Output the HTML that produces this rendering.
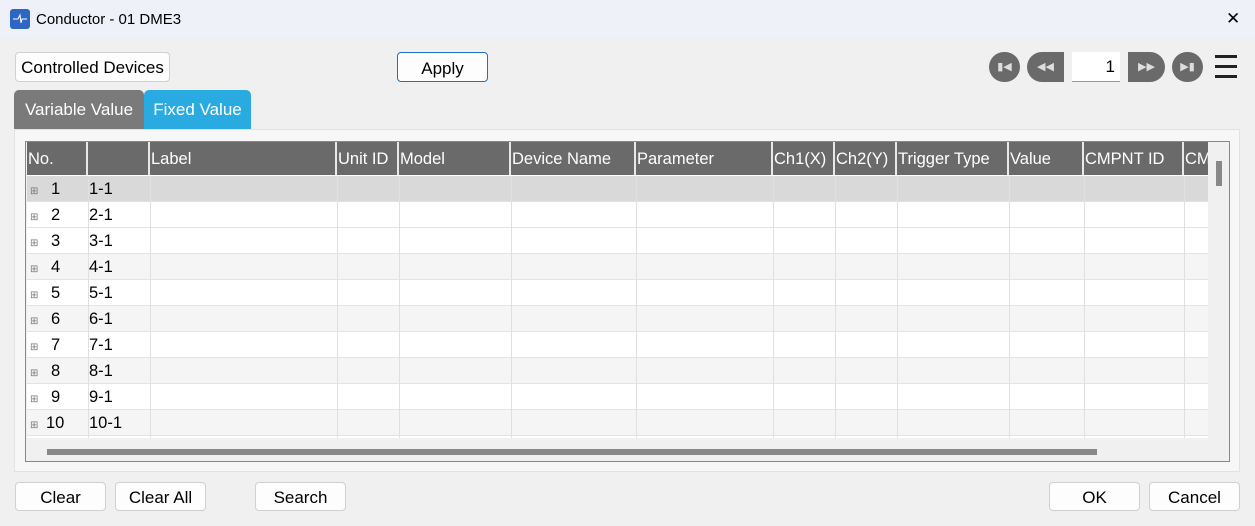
<!DOCTYPE html><html><head><style>
*{box-sizing:border-box;margin:0;padding:0}
body{width:1255px;height:526px;overflow:hidden;background:#f0f0f0;font-family:"Liberation Sans","DejaVu Sans",sans-serif;position:relative;font-size:16px;color:#000}
.a{position:absolute}
.btn{position:absolute;background:#fdfdfd;border:1px solid #d0d0d0;border-radius:4px;text-align:center;font-size:17px;line-height:29px}
.c{position:absolute;top:0;height:100%;border-left:1px solid #e0e0e0}
.h{position:absolute;top:0;height:33px;background:#6a6a6a;color:#fff;font-size:16.5px;line-height:34px;padding-left:1px;border-right:2px solid #e8e8e8}
.r{position:absolute;left:0;width:1181px;height:26px;border-bottom:1px solid #e3e3e3;font-size:16px;line-height:26px}
.nav{position:absolute;top:52px;height:30px;background:#6a6a6a;color:#ddd;font-size:11px;text-align:center;line-height:30px}
</style></head><body>
<div class="a" style="left:0;top:0;width:1255px;height:38px;background:#eef2f8"></div>
<div class="a" style="left:10px;top:9px;width:20px;height:20px;background:#2e66c4;border-radius:3px"><svg width="20" height="20"><path d="M3 10h5l2-4 1 8 1-4h5" stroke="#fff" fill="none" stroke-width="1"/></svg></div>
<div class="a" style="left:36px;top:11px;font-size:15px">Conductor - 01 DME3</div>
<div class="a" style="left:1226px;top:9px;font-size:17px">✕</div>
<div class="btn" style="left:15px;top:52px;width:155px;height:30px">Controlled Devices</div>
<div class="btn" style="left:397px;top:52px;width:91px;height:30px;border-color:#1a73c8;line-height:32px">Apply</div>
<div class="nav" style="left:989px;width:31px;border-radius:15px">▮◀</div>
<div class="nav" style="left:1027px;width:37px;border-radius:15px 0 0 15px">◀◀</div>
<div class="a" style="left:1072px;top:52px;width:48px;height:30px;background:#fff;border-bottom:1px solid #999;text-align:right;padding-right:5px;line-height:30px;font-size:17px">1</div>
<div class="nav" style="left:1128px;width:37px;border-radius:0 15px 15px 0">▶▶</div>
<div class="nav" style="left:1172px;width:31px;border-radius:15px">▶▮</div>
<div class="a" style="left:1215px;top:55px;width:22px;height:3px;background:#222;box-shadow:0 10px 0 #222,0 20px 0 #222"></div>
<div class="a" style="left:14px;top:90px;width:130px;height:39px;background:#7a7a7a;color:#fff;border-radius:5px 5px 0 0;font-size:17px;line-height:39px;text-align:center">Variable Value</div>
<div class="a" style="left:144px;top:90px;width:107px;height:39px;background:#29abe2;color:#fff;border-radius:5px 5px 0 0;font-size:17px;line-height:39px;text-align:center">Fixed Value</div>
<div class="a" style="left:14px;top:129px;width:1226px;height:343px;background:#f7f7f7;border:1px solid #e2e2e2"></div>
<div class="a" style="left:25px;top:141px;width:1205px;height:321px;background:#f0f0f0;border:1px solid #888"></div>
<div class="a" style="left:27px;top:142px;width:1181px;height:296px;background:#fff;overflow:hidden">
<div class="h" style="left:0;width:61px">No.</div><div class="h" style="left:61px;width:62px"></div><div class="h" style="left:123px;width:187px">Label</div><div class="h" style="left:310px;width:62px">Unit ID</div><div class="h" style="left:372px;width:112px">Model</div><div class="h" style="left:484px;width:125px">Device Name</div><div class="h" style="left:609px;width:137px">Parameter</div><div class="h" style="left:746px;width:62px">Ch1(X)</div><div class="h" style="left:808px;width:62px">Ch2(Y)</div><div class="h" style="left:870px;width:112px">Trigger Type</div><div class="h" style="left:982px;width:75px">Value</div><div class="h" style="left:1057px;width:100px">CMPNT ID</div><div class="h" style="left:1157px;width:30px;border:0">CM</div>
<div class="a" style="left:0;top:34px;width:1181px;height:262px">
<div class="r" style="top:0;background:#d9d9d9"></div>
<div class="r" style="top:26px"></div><div class="r" style="top:52px"></div><div class="r" style="top:78px;background:#f5f5f5"></div><div class="r" style="top:104px"></div><div class="r" style="top:130px;background:#f5f5f5"></div><div class="r" style="top:156px"></div><div class="r" style="top:182px;background:#f5f5f5"></div><div class="r" style="top:208px"></div><div class="r" style="top:234px;background:#f5f5f5"></div>
<div class="c" style="left:61px"></div><div class="c" style="left:123px"></div><div class="c" style="left:310px"></div><div class="c" style="left:372px"></div><div class="c" style="left:484px"></div><div class="c" style="left:609px"></div><div class="c" style="left:746px"></div><div class="c" style="left:808px"></div><div class="c" style="left:870px"></div><div class="c" style="left:982px"></div><div class="c" style="left:1057px"></div><div class="c" style="left:1157px"></div>
<div class="a" style="left:0;top:0;width:130px;font-size:16.5px;line-height:26px">
<div style="height:26px;position:relative"><span style="font-size:10px;color:#777;margin-left:3px">⊞</span><span class="a" style="left:24px">1</span><span class="a" style="left:62px">1-1</span></div>
<div style="height:26px;position:relative"><span style="font-size:10px;color:#777;margin-left:3px">⊞</span><span class="a" style="left:24px">2</span><span class="a" style="left:62px">2-1</span></div>
<div style="height:26px;position:relative"><span style="font-size:10px;color:#777;margin-left:3px">⊞</span><span class="a" style="left:24px">3</span><span class="a" style="left:62px">3-1</span></div>
<div style="height:26px;position:relative"><span style="font-size:10px;color:#777;margin-left:3px">⊞</span><span class="a" style="left:24px">4</span><span class="a" style="left:62px">4-1</span></div>
<div style="height:26px;position:relative"><span style="font-size:10px;color:#777;margin-left:3px">⊞</span><span class="a" style="left:24px">5</span><span class="a" style="left:62px">5-1</span></div>
<div style="height:26px;position:relative"><span style="font-size:10px;color:#777;margin-left:3px">⊞</span><span class="a" style="left:24px">6</span><span class="a" style="left:62px">6-1</span></div>
<div style="height:26px;position:relative"><span style="font-size:10px;color:#777;margin-left:3px">⊞</span><span class="a" style="left:24px">7</span><span class="a" style="left:62px">7-1</span></div>
<div style="height:26px;position:relative"><span style="font-size:10px;color:#777;margin-left:3px">⊞</span><span class="a" style="left:24px">8</span><span class="a" style="left:62px">8-1</span></div>
<div style="height:26px;position:relative"><span style="font-size:10px;color:#777;margin-left:3px">⊞</span><span class="a" style="left:24px">9</span><span class="a" style="left:62px">9-1</span></div>
<div style="height:26px;position:relative"><span style="font-size:10px;color:#777;margin-left:3px">⊞</span><span class="a" style="left:19px">10</span><span class="a" style="left:62px">10-1</span></div>
</div></div></div>
<div class="a" style="left:1216px;top:161px;width:6px;height:25px;background:#888"></div>
<div class="a" style="left:47px;top:449px;width:1050px;height:6px;background:#888"></div>
<div class="btn" style="left:15px;top:482px;width:91px;height:29px">Clear</div>
<div class="btn" style="left:115px;top:482px;width:91px;height:29px">Clear All</div>
<div class="btn" style="left:255px;top:482px;width:91px;height:29px">Search</div>
<div class="btn" style="left:1049px;top:482px;width:91px;height:29px">OK</div>
<div class="btn" style="left:1149px;top:482px;width:91px;height:29px">Cancel</div>
</body></html>
